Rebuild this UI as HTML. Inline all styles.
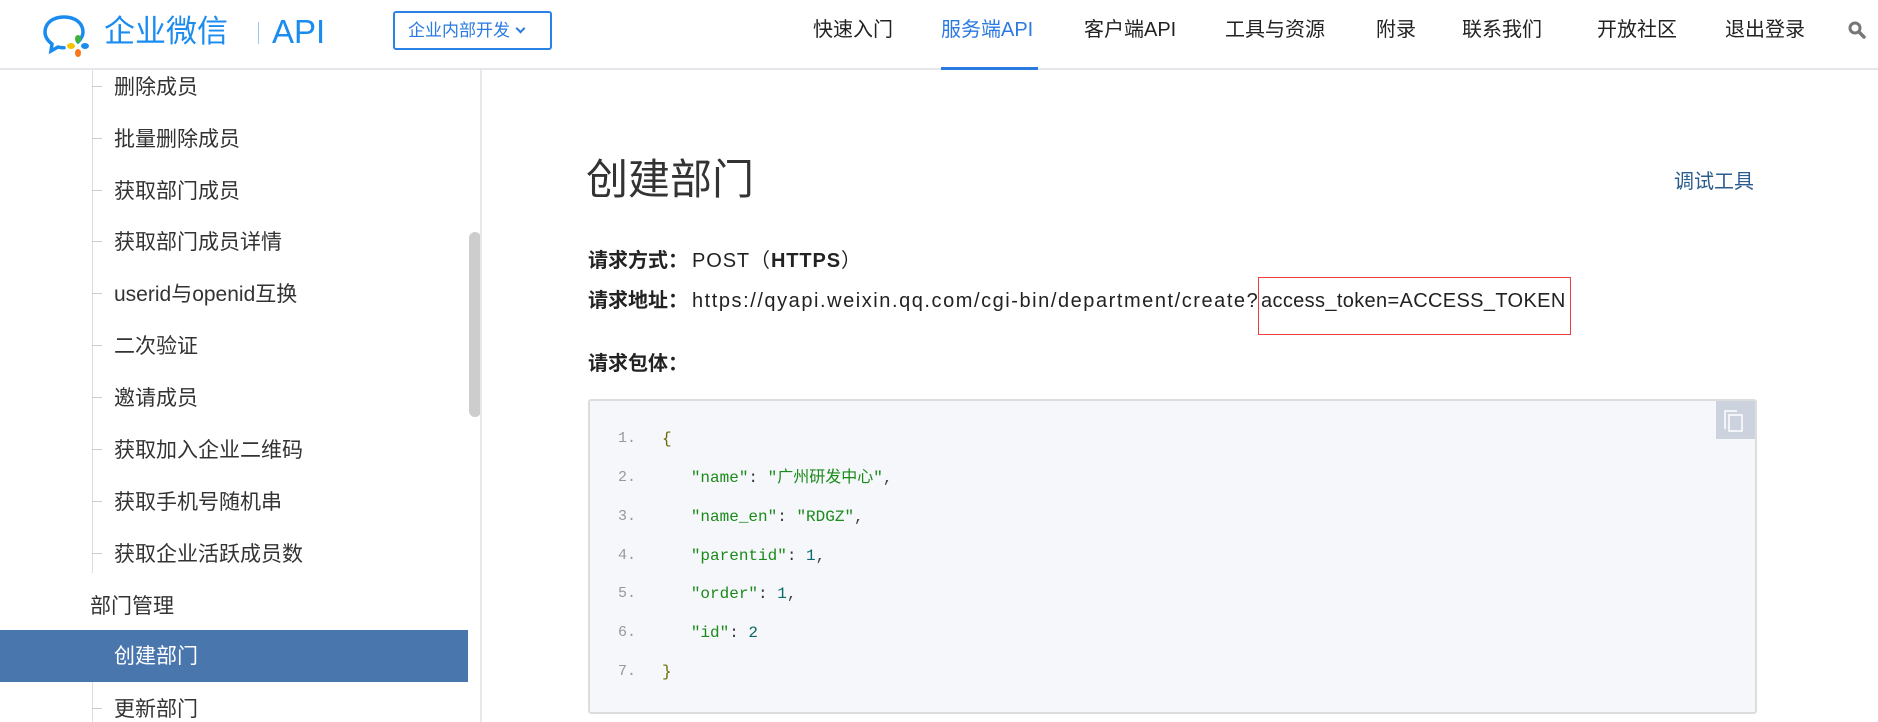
<!DOCTYPE html>
<html><head><meta charset="utf-8">
<style>
*{margin:0;padding:0;box-sizing:border-box}
body{width:1878px;height:722px;overflow:hidden;background:#fff;font-family:"Liberation Sans","Noto Sans CJK SC",sans-serif;color:#333;position:relative}
.a{position:absolute;white-space:nowrap}
.hdr{position:absolute;left:0;top:0;width:1878px;height:70px;border-bottom:2px solid #e6e6ea}
.nav{position:absolute;top:16px;font-size:20px;color:#222;line-height:28px}
.side{position:absolute;left:0;top:70px;width:482px;height:652px;border-right:2px solid #e8e8ec;overflow:hidden}
.tree{position:absolute;left:92px;top:0;width:1px;height:652px;background:#ddd}
.it{position:absolute;left:114px;font-size:21px;line-height:28px;color:#333}
.tk{position:absolute;left:92px;width:10px;height:1px;background:#ccc}
.code{position:absolute;left:588px;top:399px;width:1169px;height:315px;background:#f6f7fa;border:2px solid #ddd;border-radius:3px}
.ln{position:absolute;left:28px;font-family:"Liberation Mono",monospace;font-size:15px;color:#999;line-height:22px;height:22px}
.cl{position:absolute;left:72px;font-family:"Liberation Mono","Noto Sans CJK SC",monospace;font-size:16px;color:#333;white-space:pre;line-height:22px;height:22px}
.g{color:#1a8a1a}.b{color:#6b6b00}.n{color:#0a6b6b}.p{color:#444}
.ls{font-size:20px;letter-spacing:0.9px}
.lb{font-size:20px;line-height:26px;color:#222}
</style></head><body>
<div class="hdr"></div>
<svg class="a" style="left:42px;top:12px" width="52" height="46" viewBox="0 0 52 46">
<path d="M36 30C39 27 41 24 41 20 41 11 33 5 22 5 11 5 3 11 3 20c0 5 3 9 7 12l-1 7 7-4c2 .6 4 .8 6 .8" fill="none" stroke="#1a8cf0" stroke-width="3.5" stroke-linecap="round"/>
<ellipse cx="36" cy="27" rx="3" ry="4" fill="#3db53d"/><ellipse cx="29" cy="34" rx="4" ry="3" fill="#f5c400"/><ellipse cx="43" cy="34" rx="4" ry="3" fill="#1a8cf0"/><ellipse cx="36" cy="41" rx="3" ry="4" fill="#f5781e"/>
</svg>
<div class="a" style="left:104px;top:11px;font-size:31px;color:#1a8cf0;line-height:42px">企业微信</div>
<div class="a" style="left:258px;top:22px;width:1px;height:22px;background:#9cc9f0"></div>
<div class="a" style="left:272px;top:11px;font-size:33px;color:#1a8cf0;line-height:42px">API</div>
<div class="a" style="left:393px;top:11px;width:159px;height:39px;border:2px solid #2a82e4;border-radius:3px;color:#2a7ae2;font-size:17px;line-height:35px;padding-left:13px">企业内部开发 <span style="display:inline-block;width:7px;height:7px;border-right:2px solid #2a7ae2;border-bottom:2px solid #2a7ae2;transform:rotate(45deg);position:relative;top:-4px;left:2px"></span></div>
<div class="nav" style="left:813px">快速入门</div>
<div class="nav" style="left:941px;color:#2a7ae2">服务端API</div>
<div class="a" style="left:941px;top:67px;width:97px;height:3px;background:#2a7ae2"></div>
<div class="nav" style="left:1084px">客户端API</div>
<div class="nav" style="left:1225px">工具与资源</div>
<div class="nav" style="left:1376px">附录</div>
<div class="nav" style="left:1462px">联系我们</div>
<div class="nav" style="left:1597px">开放社区</div>
<div class="nav" style="left:1725px">退出登录</div>
<svg class="a" style="left:1848px;top:21px" width="18" height="18" viewBox="0 0 18 18"><circle cx="7" cy="7" r="5" fill="none" stroke="#777" stroke-width="3"/><path d="M11 11l5 5" stroke="#777" stroke-width="3.5" stroke-linecap="round"/></svg>

<div class="side">
<div class="tree"></div>
<div class="tk" style="top:16px"></div><div class="it" style="top:4px">删除成员</div>
<div class="tk" style="top:68px"></div><div class="it" style="top:56px">批量删除成员</div>
<div class="tk" style="top:120px"></div><div class="it" style="top:108px">获取部门成员</div>
<div class="tk" style="top:171px"></div><div class="it" style="top:159px">获取部门成员详情</div>
<div class="tk" style="top:223px"></div><div class="it" style="top:211px">userid与openid互换</div>
<div class="tk" style="top:275px"></div><div class="it" style="top:263px">二次验证</div>
<div class="tk" style="top:327px"></div><div class="it" style="top:315px">邀请成员</div>
<div class="tk" style="top:379px"></div><div class="it" style="top:367px">获取加入企业二维码</div>
<div class="tk" style="top:431px"></div><div class="it" style="top:419px">获取手机号随机串</div>
<div class="tk" style="top:483px"></div><div class="it" style="top:471px">获取企业活跃成员数</div>
<div class="a" style="left:0;top:503px;width:93px;height:60px;background:#fff"></div>
<div class="it" style="left:90px;top:523px">部门管理</div>
<div class="a" style="left:0;top:560px;width:468px;height:52px;background:#4a76ae"></div>
<div class="it" style="top:573px;color:#fff">创建部门</div>
<div class="tk" style="top:638px"></div><div class="it" style="top:626px">更新部门</div>
<div class="a" style="left:469px;top:162px;width:12px;height:185px;background:#cdcdcd;border-radius:6px"></div>
</div>

<div class="a" style="left:586px;top:154px;font-size:42px;color:#333;line-height:52px">创建部门</div>
<div class="a" style="left:1674px;top:168px;font-size:20px;color:#2b5d8c;line-height:28px">调试工具</div>
<div class="a lb" style="left:588px;top:248px"><b>请求方式：</b><span class="ls" style="margin-left:4px">POST（<b>HTTPS</b>）</span></div>
<div class="a lb" style="left:588px;top:288px"><b>请求地址：</b><span class="ls" style="letter-spacing:1.55px;margin-left:4px">https://qyapi.weixin.qq.com/cgi-bin/department/create?</span></div>
<div class="a ls lb" style="left:1261px;top:288px;letter-spacing:0.35px">access_token=ACCESS_TOKEN</div>
<div class="a" style="left:1258px;top:277px;width:313px;height:58px;border:1px solid #f03c3c"></div>
<div class="a lb" style="left:588px;top:351px"><b>请求包体：</b></div>

<div class="code">
<div class="a" style="right:0;top:0;width:39px;height:38px;background:#cdd3de"></div>
<svg class="a" style="right:10px;top:8px" width="22" height="24" viewBox="0 0 22 24"><path d="M2 20V2h12" fill="none" stroke="#fff" stroke-width="1.5"/><rect x="6" y="6" width="13" height="16" fill="none" stroke="#fff" stroke-width="1.5"/></svg>
<div class="ln" style="top:27px">1.</div><div class="cl b" style="top:27px">{</div>
<div class="ln" style="top:66px">2.</div><div class="cl" style="top:66px">   <span class="g">"name"</span>: <span class="g">"广州研发中心"</span><span class="p">,</span></div>
<div class="ln" style="top:105px">3.</div><div class="cl" style="top:105px">   <span class="g">"name_en"</span>: <span class="g">"RDGZ"</span><span class="p">,</span></div>
<div class="ln" style="top:144px">4.</div><div class="cl" style="top:144px">   <span class="g">"parentid"</span>: <span class="n">1</span><span class="p">,</span></div>
<div class="ln" style="top:182px">5.</div><div class="cl" style="top:182px">   <span class="g">"order"</span>: <span class="n">1</span><span class="p">,</span></div>
<div class="ln" style="top:221px">6.</div><div class="cl" style="top:221px">   <span class="g">"id"</span>: <span class="n">2</span></div>
<div class="ln" style="top:260px">7.</div><div class="cl b" style="top:260px">}</div>
</div>
</body></html>
